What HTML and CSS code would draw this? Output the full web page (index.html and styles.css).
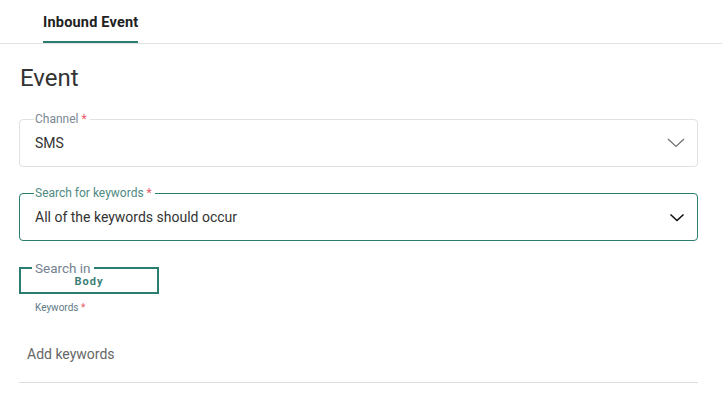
FILE: index.html
```html
<!DOCTYPE html>
<html>
<head>
<meta charset="utf-8">
<link rel="stylesheet" href="styles.css">
</head>
<body>
<div class="tabs">
  <div class="tab active">Inbound Event</div>
</div>
<div class="content">
  <h1 class="title">Event</h1>
  <fieldset class="field">
    <legend class="legend">Channel <span class="req">*</span></legend>
    <div class="field-row">
      <span class="value">SMS</span>
      <svg class="chev light" width="18" height="10" viewBox="0 0 18 10"><path d="M1 1 L9 8.5 L17 1" fill="none" stroke="#6f6f6f" stroke-width="1.2"/></svg>
    </div>
  </fieldset>
  <fieldset class="field focused">
    <legend class="legend teal">Search for keywords <span class="req">*</span></legend>
    <div class="field-row">
      <span class="value">All of the keywords should occur</span>
      <svg class="chev" width="16" height="9" viewBox="0 0 16 9"><path d="M1.5 1.5 L8 7.5 L14.5 1.5" fill="none" stroke="#111" stroke-width="1.6"/></svg>
    </div>
  </fieldset>
  <fieldset class="searchin">
    <legend class="legend">Search in</legend>
    <div class="body-opt">Body</div>
  </fieldset>
  <div class="kw-label">Keywords <span class="req">*</span></div>
  <div class="kw-input">Add keywords</div>
</div>
</body>
</html>
```
FILE: styles.css
```css
* { box-sizing: border-box; }
html, body { margin: 0; padding: 0; background: #fff; }
body { font-family: Roboto, "Liberation Sans", sans-serif; color: #333; width: 722px; }
.tabs {
  height: 44px;
  border-bottom: 1px solid #e2e2e2;
  display: flex;
  padding-left: 43px;
}
.tab {
  font-size: 14.5px;
  letter-spacing: 0.2px;
  font-weight: 700;
  color: #222;
  padding-top: 14px;
  height: 43px;
  border-bottom: 2px solid #2b7d6f;
}
.content { padding: 0 24px 0 19px; }
.title {
  font-size: 24px;
  font-weight: 400;
  color: #333;
  margin: 18px 0 0 1px;
  line-height: 32px;
}
.field {
  margin: 18px 0 0 0;
  padding: 0 16px 0 15px;
  border: 1px solid #dfe1e3;
  border-radius: 4px;
  min-width: 0;
}
.field.focused { border-color: #2b7d6f; margin-top: 19px; }
.legend {
  font-size: 12px;
  line-height: 14px;
  color: #7b8794;
  padding: 0 3px 0 1px;
  margin-left: -1px;
}
.legend.teal { color: #4e8a82; }
.field-row {
  display: flex;
  align-items: center;
  justify-content: space-between;
  height: 40px;
  padding-bottom: 6px;
}
.value { font-size: 14px; color: #333; }
.chev { display: block; margin-right: -4px; }
.searchin {
  margin: 20px 0 0 0;
  width: 140px;
  padding: 0;
  border: 2px solid #2b7d6f;
  border-radius: 0;
  min-width: 0;
}
.searchin .legend { font-size: 13.5px; margin-left: 11px; padding: 0 3px; color: #768290; }
.body-opt {
  text-align: center;
  font-size: 11px;
  font-weight: 700;
  letter-spacing: 1px;
  color: #3d7f77;
  height: 17px;
  line-height: 13px;
}
.kw-label {
  font-size: 10px;
  color: #5e7a86;
  margin: 8px 0 0 16px;
}
.req { color: #e85a6a; }
.kw-input {
  font-size: 14px;
  color: #666;
  padding: 0 0 20px 8px;
  margin-top: 33px;
  border-bottom: 1px solid #dcdcdc;
}
```
